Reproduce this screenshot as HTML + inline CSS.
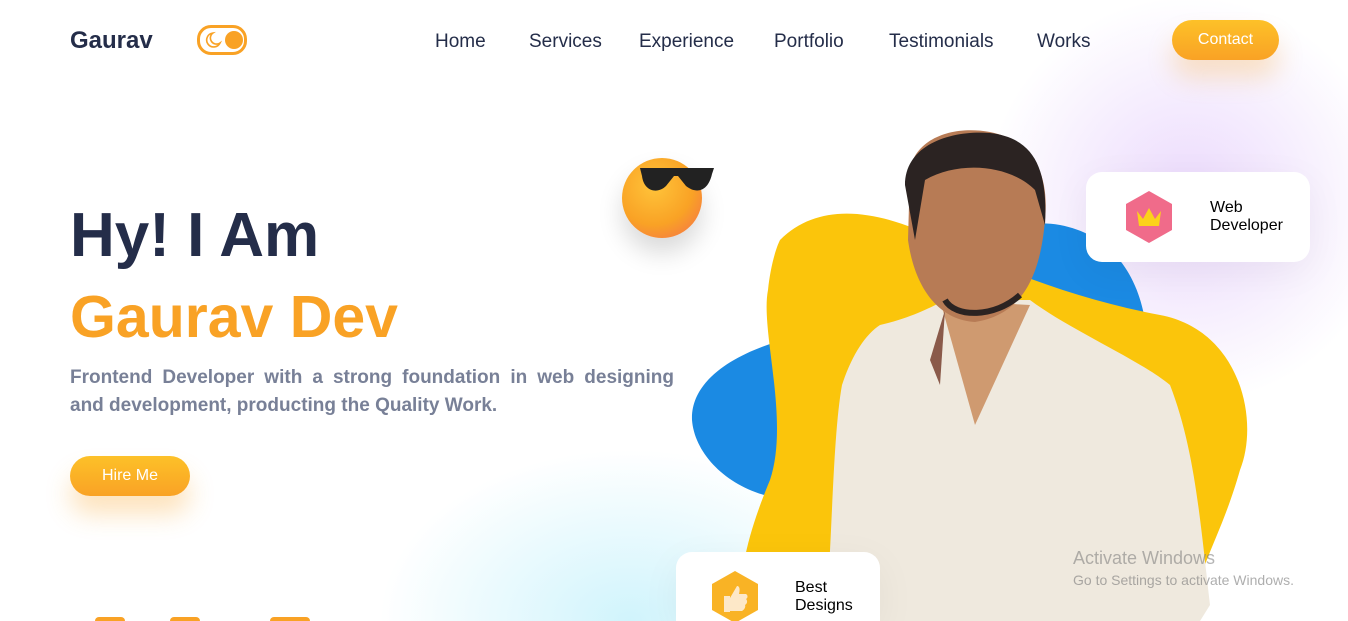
<!DOCTYPE html>
<html><head><style>
*{margin:0;padding:0;box-sizing:border-box}
html,body{width:1348px;height:621px;overflow:hidden}
body{background:#fff;font-family:"Liberation Sans",sans-serif;position:relative}
.a{position:absolute}
.nav{font-size:19px;color:#242d49;top:31px}
.card{background:#fff;border-radius:16px;box-shadow:0 10px 40px rgba(0,0,0,.05)}
</style></head><body>
<div class="a" style="left:950px;top:-40px;width:398px;height:480px;background:radial-gradient(circle at 60% 50%,rgba(215,180,250,.5),rgba(255,255,255,0) 60%);"></div>
<div class="a" style="left:380px;top:450px;width:500px;height:171px;background:radial-gradient(250px 170px at 250px 170px,rgba(170,235,250,.55),rgba(255,255,255,0));"></div>
<div class="a" style="left:70px;top:27px;font-size:24px;font-weight:bold;color:#242d49">Gaurav</div>
<div class="a" style="left:197px;top:25px;width:50px;height:30px;border:3px solid #f9a225;border-radius:14px">
<div class="a" style="left:25px;top:3px;width:18px;height:18px;border-radius:50%;background:#f9a225"></div>
<svg class="a" style="left:4px;top:3px" width="18" height="18" viewBox="0 0 18 18"><path d="M9 2A7 7 0 1 0 16 12A6 6 0 0 1 9 2Z" fill="none" stroke="#f9a225" stroke-width="1.6"/></svg></div>
<div class="a nav" style="left:435px">Home</div>
<div class="a nav" style="left:529px">Services</div>
<div class="a nav" style="left:639px">Experience</div>
<div class="a nav" style="left:774px">Portfolio</div>
<div class="a nav" style="left:889px">Testimonials</div>
<div class="a nav" style="left:1037px">Works</div>
<div class="a" style="left:1172px;top:20px;width:107px;height:40px;border-radius:20px;background:linear-gradient(#fdc128,#f9a225);color:#fff;font-size:16px;text-align:center;line-height:39px;box-shadow:0 18px 25px rgba(249,162,37,.25)">Contact</div>
<div class="a" style="left:70px;top:200px;font-size:62px;font-weight:bold;color:#242d49">Hy! I Am</div>
<div class="a" style="left:70px;top:283px;font-size:59px;font-weight:bold;color:#f9a225">Gaurav Dev</div>
<div class="a" style="left:70px;top:364px;width:604px;font-size:19px;line-height:28px;color:#788097;text-align:justify;font-weight:bold;text-align-last:left">Frontend Developer with a strong foundation in web designing and development, producting the Quality Work.</div>
<div class="a" style="left:70px;top:456px;width:120px;height:40px;border-radius:20px;background:linear-gradient(#fdc128,#f9a225);color:#fff;font-size:16px;text-align:center;line-height:39px;box-shadow:0 18px 25px rgba(249,162,37,.3)">Hire Me</div>
<div class="a" style="left:622px;top:158px;width:80px;height:80px;border-radius:50%;background:radial-gradient(circle at 40% 35%,#ffc43a,#f9a225 55%,#f46a50);box-shadow:0 15px 25px rgba(0,0,0,.15)"></div>
<svg class="a" style="left:638px;top:164px" width="78" height="36" viewBox="0 0 78 36"><path d="M2 4H76L74 10C70 28 58 30 48 22L40 12H36L28 22C20 30 6 28 4 12Z" fill="#222"/></svg>
<svg class="a" style="left:690px;top:120px" width="570" height="501" viewBox="690 120 570 501">
<path d="M692 420C690 370 760 340 830 330C900 300 980 210 1060 225C1140 240 1160 330 1140 400C1100 500 900 480 800 500C740 500 695 460 692 420Z" fill="#1b8ae3"/>
<path d="M780 240C820 200 880 210 940 240C1000 270 1080 300 1160 315C1240 330 1260 420 1240 470C1220 540 1200 560 1190 621H740C738 580 745 540 770 480C790 420 760 330 768 290C770 270 775 250 780 240Z" fill="#fbc50b"/>
<path d="M880 325C910 318 930 308 945 300L1030 300C1070 330 1140 360 1170 385C1195 450 1200 520 1210 605L1200 621H825C832 560 832 440 842 385C852 355 865 335 880 325Z" fill="#efe9de"/>
<path d="M940 300L975 425L1030 305Z" fill="#cf9a70"/>
<path d="M930 360L945 310L940 385Z" fill="#8a5a4a"/>
<path d="M910 170C915 140 950 125 990 132C1030 140 1050 170 1045 220C1040 280 1020 315 975 322C940 320 915 290 908 240Z" fill="#b77b55"/>
<path d="M905 185C905 145 950 130 990 133C1035 138 1048 170 1045 225L1035 190C1010 165 960 160 925 180L915 240Z" fill="#2b2322"/>
<path d="M945 300C955 318 995 318 1020 295" stroke="#2b2322" stroke-width="6" fill="none"/>
</svg>
<div class="a card" style="left:1086px;top:172px;width:224px;height:90px"></div>
<svg class="a" style="left:1124px;top:190px" width="50" height="54" viewBox="0 0 50 54"><path d="M25 1L48 14V40L25 53L2 40V14Z" fill="#f06b8a"/><path d="M13 21L19 29L25 18L31 29L37 21L35 36H15Z" fill="#fcd21a"/></svg>
<div class="a" style="left:1210px;top:199px;font-size:16px;line-height:18px;color:#000">Web<br>Developer</div>
<div class="a card" style="left:676px;top:552px;width:204px;height:69px;border-radius:16px 16px 0 0"></div>
<svg class="a" style="left:710px;top:570px" width="50" height="51" viewBox="0 0 50 51"><path d="M25 1L48 14V40L25 53L2 40V14Z" fill="#f9b325"/><path d="M14 26H20V42H14ZM20 28L27 16C30 16 30 20 29 24H36C38 25 38 28 36 29C38 31 37 34 35 35C36 37 34 40 32 41H20Z" fill="#fde8c8"/></svg>
<div class="a" style="left:795px;top:579px;font-size:16px;line-height:18px;color:#000">Best<br>Designs</div>
<div class="a" style="left:1073px;top:548px;font-size:18px;color:rgba(120,120,120,.55)">Activate Windows</div>
<div class="a" style="left:1073px;top:572px;font-size:14px;color:rgba(120,120,120,.6)">Go to Settings to activate Windows.</div>
<div class="a" style="left:95px;top:617px;width:30px;height:4px;border-radius:15px 15px 0 0;background:#f9a225"></div>
<div class="a" style="left:170px;top:617px;width:30px;height:4px;border-radius:15px 15px 0 0;background:#f9a225"></div>
<div class="a" style="left:270px;top:617px;width:40px;height:4px;border-radius:20px 20px 0 0;background:#f9a225"></div>
</body></html>
